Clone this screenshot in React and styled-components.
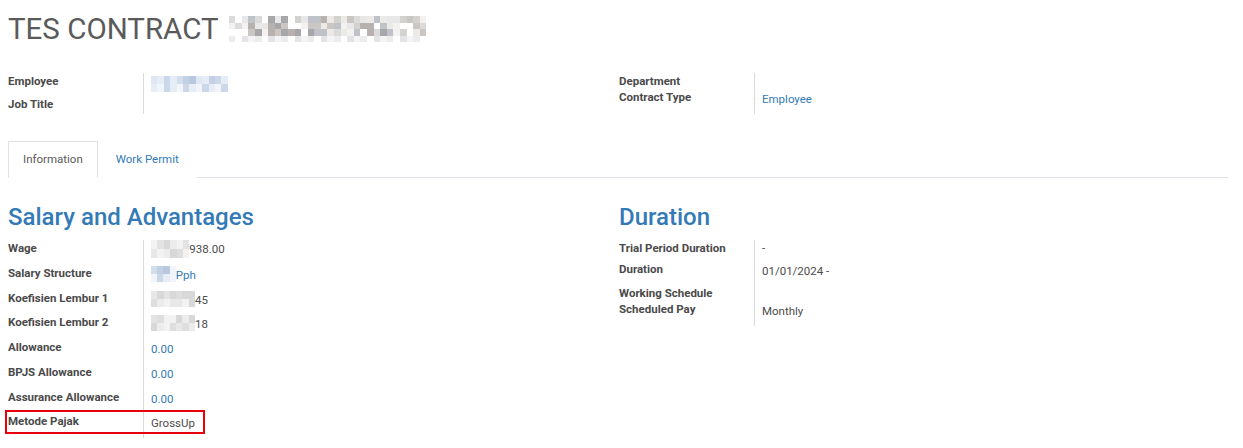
import React from "react";
import styled, { createGlobalStyle } from "styled-components";

const GlobalStyle = createGlobalStyle`
  body {
    margin: 0;
    background: #fff;
    font-family: Roboto, "Noto Sans", sans-serif;
    color: #4c4c4c;
  }
`;

const Sheet = styled.div`
  width: 1220px;
  padding: 0 15px 0 8px;
`;

const Title = styled.h1`
  margin: 0;
  padding-top: 11px;
  height: 73px;
  box-sizing: border-box;
  display: flex;
  align-items: flex-start;
  gap: 10px;
  font-size: 29.5px;
  font-weight: 400;
  line-height: 36px;
  color: #5a5a5a;
`;

const TitleMosaic = styled.span`
  display: inline-block;
  margin-top: 5px;
`;

const Columns = styled.div`
  display: grid;
  grid-template-columns: 611px 1fr;
`;

const Group = styled.div`
  display: grid;
  grid-template-columns: 135px 1fr;
  align-content: start;
`;

const Label = styled.div`
  font-size: 11.5px;
  font-weight: 700;
  line-height: 16px;
  color: #4a4a4a;
  height: ${(p) => p.h}px;
  box-sizing: border-box;
  white-space: nowrap;
`;

const Value = styled.div`
  border-left: 1px solid #d9d9d9;
  padding-left: 7px;
  height: ${(p) => p.h}px;
  padding-top: ${(p) => p.pt || 0}px;
  box-sizing: border-box;
  font-size: 11.5px;
  line-height: 16px;
  color: ${(p) => (p.link ? "#337ab7" : "#4c4c4c")};
  display: flex;
  align-items: flex-start;
`;

const Tabs = styled.div`
  display: flex;
  margin-top: 27px;
  border-bottom: 1px solid #dee2e6;
  height: 36px;
`;

const Tab = styled.div`
  box-sizing: border-box;
  height: 37px;
  padding: 0 ${(p) => (p.active ? "14px" : "17px")};
  font-size: 11.5px;
  line-height: 35px;
  color: ${(p) => (p.active ? "#5a5a5a" : "#337ab7")};
  background: #fff;
  border: 1px solid ${(p) => (p.active ? "#dee2e6" : "transparent")};
  border-bottom-color: ${(p) => (p.active ? "#fff" : "transparent")};
`;

const SectionTitle = styled.h2`
  margin: 0;
  padding-top: 24px;
  height: 62px;
  box-sizing: border-box;
  font-size: 24px;
  font-weight: 500;
  line-height: 30px;
  color: #337ab7;
`;

const Highlight = styled.div`
  grid-column: 1 / 3;
  display: grid;
  grid-template-columns: 135px 1fr;
  position: relative;
  &::after {
    content: "";
    position: absolute;
    box-sizing: border-box;
    left: -3px;
    top: -3px;
    width: 200px;
    height: 24px;
    border: 2px solid #e8000b;
    pointer-events: none;
  }
`;

const MosaicGrid = styled.span`
  display: inline-grid;
  grid-template-columns: repeat(${(p) => p.cols}, ${(p) => p.cw}px);
  grid-auto-rows: ${(p) => p.ch}px;
  vertical-align: top;
`;

const palettes = {
  gray: ["#b7b2b0", "#c9c6c4", "#dcdbdb", "#e9e8e8", "#a7a6a8", "#f3f2f1", "#bfc2c8", "#d4d2cf", "#eceae6", "#ffffff"],
  blue: ["#c3d0e4", "#b7c8df", "#d3deec", "#e6edf6", "#f1f5fa", "#cbd8ea", "#dfe7f2"],
  light: ["#e3e3e3", "#d8d8d8", "#ececec", "#f2f2f2", "#dedede", "#e8e8e8"],
};

function Mosaic({ cols, rows, cw = 6.6, ch = 8, palette = "gray", seed = 1 }) {
  const colors = palettes[palette];
  let s = seed * 9301 + 49297;
  const cells = [];
  for (let i = 0; i < cols * rows; i++) {
    s = (s * 9301 + 49297) % 233280;
    const row = Math.floor(i / cols);
    let c = colors[Math.floor((s / 233280) * colors.length)];
    if (palette === "blue" && row > 0) c = colors[3 + (i % 3)];
    if (palette === "gray" && row === rows - 1) c = ["#e4e4e6", "#f4f4f5", "#ececec", "#ffffff"][i % 4];
    cells.push(<span key={i} style={{ background: c }} />);
  }
  return (
    <MosaicGrid cols={cols} cw={cw} ch={ch}>
      {cells}
    </MosaicGrid>
  );
}

const Text = styled.span`
  line-height: 16px;
  padding-top: ${(p) => p.pt || 0}px;
`;

export default function App() {
  return (
    <>
      <GlobalStyle />
      <Sheet>
        <Title>
          TES CONTRACT
          <TitleMosaic>
            <Mosaic cols={30} rows={4} cw={6.6} ch={6.6} seed={3} />
          </TitleMosaic>
        </Title>

        <Columns>
          <Group>
            <Label h={23}>Employee</Label>
            <Value h={23} pt={3} link>
              <Mosaic cols={12} rows={2} cw={6.4} ch={8} palette="blue" seed={5} />
            </Value>
            <Label h={18}>Job Title</Label>
            <Value h={18} />
          </Group>
          <Group>
            <Label h={16}>Department</Label>
            <Value h={16} />
            <Label h={25}>Contract Type</Label>
            <Value h={25} pt={2} link>Employee</Value>
          </Group>
        </Columns>

        <Tabs>
          <Tab active>Information</Tab>
          <Tab>Work Permit</Tab>
        </Tabs>

        <Columns>
          <div>
            <SectionTitle>Salary and Advantages</SectionTitle>
            <Group>
              <Label h={24.75}>Wage</Label>
              <Value h={24.75} pt={0}>
                <Mosaic cols={6} rows={2} cw={6.4} ch={9} palette="light" seed={7} />
                <Text pt={1}>938.00</Text>
              </Value>
              <Label h={24.75}>Salary Structure</Label>
              <Value h={24.75} pt={1} link>
                <Mosaic cols={4} rows={2} cw={6.2} ch={8} palette="blue" seed={2} />
                <Text pt={1}>Pph</Text>
              </Value>
              <Label h={24.75}>Koefisien Lembur 1</Label>
              <Value h={24.75} pt={1}>
                <Mosaic cols={7} rows={2} cw={6.3} ch={8} palette="light" seed={11} />
                <Text pt={1}>45</Text>
              </Value>
              <Label h={24.75}>Koefisien Lembur 2</Label>
              <Value h={24.75} pt={1}>
                <Mosaic cols={7} rows={2} cw={6.3} ch={8} palette="light" seed={4} />
                <Text pt={1}>18</Text>
              </Value>
              <Label h={24.75}>Allowance</Label>
              <Value h={24.75} pt={2} link>0.00</Value>
              <Label h={24.75}>BPJS Allowance</Label>
              <Value h={24.75} pt={2} link>0.00</Value>
              <Label h={24.75}>Assurance Allowance</Label>
              <Value h={24.75} pt={2} link>0.00</Value>
              <Highlight>
                <Label h={24.75}>Metode Pajak</Label>
                <Value h={24.75} pt={2}>GrossUp</Value>
              </Highlight>
            </Group>
          </div>
          <div>
            <SectionTitle>Duration</SectionTitle>
            <Group>
              <Label h={21}>Trial Period Duration</Label>
              <Value h={21} pt={0}>-</Value>
              <Label h={24}>Duration</Label>
              <Value h={24} pt={2}>01/01/2024 -</Value>
              <Label h={16}>Working Schedule</Label>
              <Value h={16} />
              <Label h={25}>Scheduled Pay</Label>
              <Value h={25} pt={2}>Monthly</Value>
            </Group>
          </div>
        </Columns>
      </Sheet>
    </>
  );
}
